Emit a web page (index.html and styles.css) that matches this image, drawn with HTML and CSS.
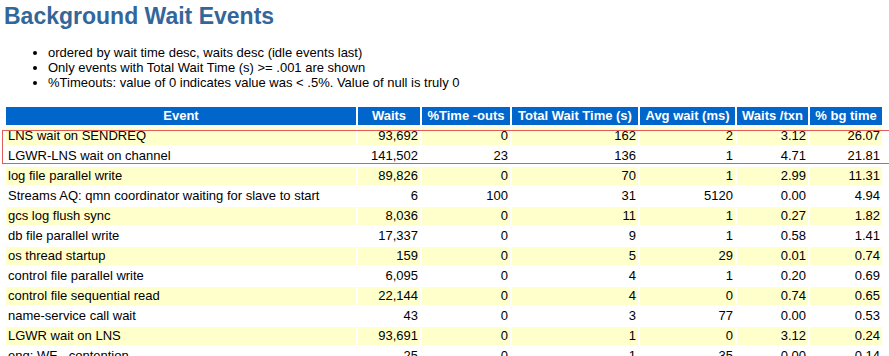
FILE: index.html
```html
<!DOCTYPE html>
<html>
<head>
<meta charset="utf-8">
<title>Background Wait Events</title>
<link rel="stylesheet" href="styles.css">
</head>
<body>
<h2 class="title">Background Wait Events</h2>
<ul class="notes">
<li>ordered by wait time desc, waits desc (idle events last)</li>
<li>Only events with Total Wait Time (s) &gt;= .001 are shown</li>
<li>%Timeouts: value of 0 indicates value was &lt; .5%. Value of null is truly 0</li>
</ul>
<div class="table-wrap">
<table class="report">
<thead>
<tr>
<th class="c-event">Event</th>
<th class="c-waits">Waits</th>
<th class="c-tout">%Time -outs</th>
<th class="c-total">Total Wait Time (s)</th>
<th class="c-avg">Avg wait (ms)</th>
<th class="c-txn">Waits /txn</th>
<th class="c-bg">% bg time</th>
</tr>
</thead>
<tbody>
<tr class="odd"><td>LNS wait on SENDREQ</td><td class="num">93,692</td><td class="num">0</td><td class="num">162</td><td class="num">2</td><td class="num">3.12</td><td class="num">26.07</td></tr>
<tr><td>LGWR-LNS wait on channel</td><td class="num">141,502</td><td class="num">23</td><td class="num">136</td><td class="num">1</td><td class="num">4.71</td><td class="num">21.81</td></tr>
<tr class="odd"><td>log file parallel write</td><td class="num">89,826</td><td class="num">0</td><td class="num">70</td><td class="num">1</td><td class="num">2.99</td><td class="num">11.31</td></tr>
<tr><td>Streams AQ: qmn coordinator waiting for slave to start</td><td class="num">6</td><td class="num">100</td><td class="num">31</td><td class="num">5120</td><td class="num">0.00</td><td class="num">4.94</td></tr>
<tr class="odd"><td>gcs log flush sync</td><td class="num">8,036</td><td class="num">0</td><td class="num">11</td><td class="num">1</td><td class="num">0.27</td><td class="num">1.82</td></tr>
<tr><td>db file parallel write</td><td class="num">17,337</td><td class="num">0</td><td class="num">9</td><td class="num">1</td><td class="num">0.58</td><td class="num">1.41</td></tr>
<tr class="odd"><td>os thread startup</td><td class="num">159</td><td class="num">0</td><td class="num">5</td><td class="num">29</td><td class="num">0.01</td><td class="num">0.74</td></tr>
<tr><td>control file parallel write</td><td class="num">6,095</td><td class="num">0</td><td class="num">4</td><td class="num">1</td><td class="num">0.20</td><td class="num">0.69</td></tr>
<tr class="odd"><td>control file sequential read</td><td class="num">22,144</td><td class="num">0</td><td class="num">4</td><td class="num">0</td><td class="num">0.74</td><td class="num">0.65</td></tr>
<tr><td>name-service call wait</td><td class="num">43</td><td class="num">0</td><td class="num">3</td><td class="num">77</td><td class="num">0.00</td><td class="num">0.53</td></tr>
<tr class="odd"><td>LGWR wait on LNS</td><td class="num">93,691</td><td class="num">0</td><td class="num">1</td><td class="num">0</td><td class="num">3.12</td><td class="num">0.24</td></tr>
<tr><td>enq: WF - contention</td><td class="num">25</td><td class="num">0</td><td class="num">1</td><td class="num">35</td><td class="num">0.00</td><td class="num">0.14</td></tr>
</tbody>
</table>
<div class="highlight"></div>
</div>
</body>
</html>
```
FILE: styles.css
```css
html, body {
  overflow: hidden;
}
body {
  margin: 0;
  padding: 0 4px;
  background: #ffffff;
  color: #000000;
  font-family: "Liberation Sans", Arial, sans-serif;
  font-size: 13px;
}
.title {
  margin: 0;
  padding-top: 3px;
  font-size: 23px;
  line-height: 26px;
  font-weight: bold;
  color: #336699;
}
.notes {
  margin: 16px 0 0 0;
  padding-left: 44px;
  line-height: 15px;
}
.table-wrap {
  position: relative;
  margin-top: 15px;
}
.report {
  border-collapse: separate;
  border-spacing: 2px;
  table-layout: fixed;
  width: 880px;
}
.report th,
.report td {
  box-sizing: border-box;
  height: 18px;
  line-height: 18px;
  padding: 0 2px;
  white-space: nowrap;
  overflow: hidden;
}
.report th {
  background: #0066cc;
  color: #ffffff;
  font-weight: bold;
  text-align: center;
}
.report td {
  text-align: left;
}
.report td.num {
  text-align: right;
}
.report tr.odd td {
  background: #ffffcc;
}
.c-event { width: 350px; }
.c-waits { width: 62px; }
.c-tout { width: 88px; }
.c-total { width: 126px; }
.c-avg { width: 95px; }
.c-txn { width: 71px; }
.c-bg { width: 72px; }
.highlight {
  position: absolute;
  left: -2px;
  right: -40px;
  top: 25px;
  height: 32px;
  border: 1px solid #e35b5b;
  pointer-events: none;
}
```
